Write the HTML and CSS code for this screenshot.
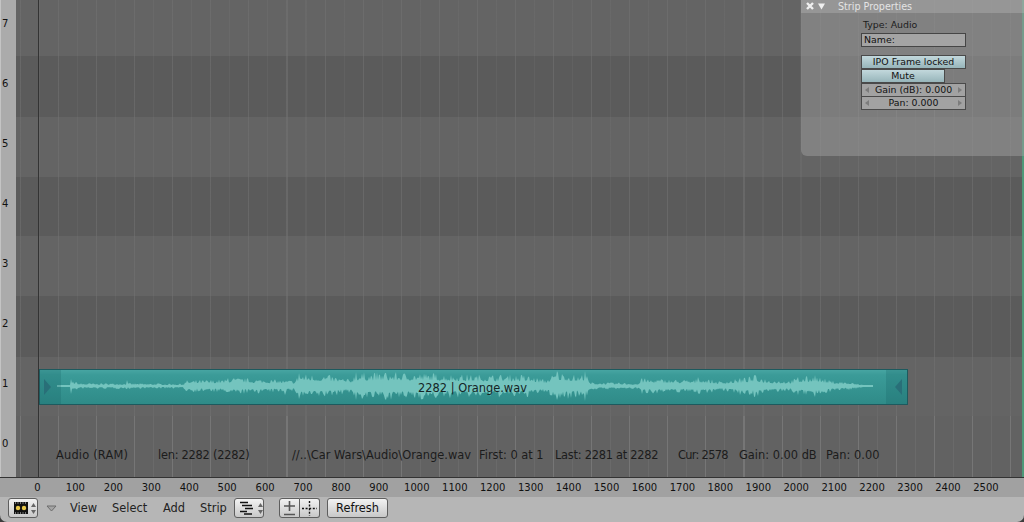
FILE: index.html
```html
<!DOCTYPE html>
<html lang="en">
<head>
  <meta charset="UTF-8" />
  <title>Video Sequence Editor</title>
  <link rel="stylesheet" href="styles.css">
</head>
<body>
  <div class="window">
    <div class="main">
      <div class="y-ruler">
        <span>7</span><span>6</span><span>5</span><span>4</span>
        <span>3</span><span>2</span><span>1</span><span>0</span>
      </div>

      <div class="canvas">
        <div class="band light h56"></div>
        <div class="band dark h61"></div>
        <div class="band light h60"></div>
        <div class="band dark h59"></div>
        <div class="band light h60"></div>
        <div class="band dark h61"></div>
        <div class="band light h59"></div>
        <div class="band last h61">
          <div class="status">
            <span class="wide">Audio (RAM)</span>
            <span class="tight">len: 2282 (2282)</span>
            <span>//..\Car Wars\Audio\Orange.wav</span>
            <span>First: 0 at 1</span>
            <span class="tight">Last: 2281 at 2282</span>
            <span class="tighter">Cur: 2578</span>
            <span>Gain: 0.00 dB</span>
            <span>Pan: 0.00</span>
          </div>
        </div>

        <div class="strip">
          <svg class="wave" viewBox="39 369 869 36" preserveAspectRatio="none">
            <polygon id="wave" points=""></polygon>
          </svg>
          <div class="handle left"><i></i></div>
          <div class="strip-name">2282 | Orange.wav</div>
          <div class="handle right"><i></i></div>
        </div>
      </div>

      <div class="panel">
        <div class="panel-head">
          <svg class="panel-icons" width="22" height="11" viewBox="0 0 22 11">
            <path d="M2 2 L8 8 M8 2 L2 8" stroke="#f0f0f0" stroke-width="2.4" fill="none"></path>
            <path d="M13 2.5 H20 L16.5 8.5 Z" fill="#f0f0f0"></path>
          </svg>
          <span>Strip Properties</span>
        </div>
        <div class="panel-body">
          <div class="type-label">Type: Audio</div>
          <div class="field">Name:</div>
          <div class="btn-stack">
            <div class="toggle">IPO Frame locked</div>
            <div class="toggle short">Mute</div>
            <div class="num"><b class="arr-l"></b>Gain (dB): 0.000<b class="arr-r"></b></div>
            <div class="num"><b class="arr-l"></b>Pan: 0.000<b class="arr-r"></b></div>
          </div>
        </div>
      </div>
    </div>

    <div class="x-ruler">
      <span>0</span><span>100</span><span>200</span><span>300</span><span>400</span><span>500</span>
      <span>600</span><span>700</span><span>800</span><span>900</span><span>1000</span><span>1100</span>
      <span>1200</span><span>1300</span><span>1400</span><span>1500</span><span>1600</span><span>1700</span>
      <span>1800</span><span>1900</span><span>2000</span><span>2100</span><span>2200</span><span>2300</span>
      <span>2400</span><span>2500</span>
    </div>

    <div class="header">
      <div class="btn icon-menu">
        <svg width="14" height="12" viewBox="0 0 14 12">
          <rect width="14" height="12" fill="#111"></rect>
          <circle cx="4" cy="6" r="2.2" fill="#e8c84a"></circle>
          <circle cx="10" cy="6" r="2.2" fill="#e8c84a"></circle>
          <path d="M1 1 H13 M1 11 H13" stroke="#ddd" stroke-width="1" stroke-dasharray="1 1.5"></path>
        </svg>
        <svg class="updown" width="5" height="11" viewBox="0 0 5 11">
          <path d="M2.5 0 L5 4 H0 Z M2.5 11 L5 7 H0 Z" fill="#666"></path>
        </svg>
      </div>
      <svg class="pulldown" width="11" height="7" viewBox="0 0 11 7">
        <path d="M1 1 H10 L5.5 6 Z" fill="#a4a4a4" stroke="#6c6c6c"></path>
      </svg>
      <nav class="menu">
        <span>View</span><span>Select</span><span>Add</span><span>Strip</span>
      </nav>
      <div class="btn icon-menu display">
        <svg width="16" height="14" viewBox="0 0 16 14">
          <path d="M1 1.5 H9 M3 4.5 H13 M6 7.5 H14 M1 10.5 H8 M5 13 H13" stroke="#111" stroke-width="1.4"></path>
        </svg>
        <svg class="updown" width="5" height="11" viewBox="0 0 5 11">
          <path d="M2.5 0 L5 4 H0 Z M2.5 11 L5 7 H0 Z" fill="#666"></path>
        </svg>
      </div>
      <div class="btn-group">
        <div class="btn seg">
          <svg width="13" height="15" viewBox="0 0 13 15">
            <path d="M1 5 H12 M6.5 0 V10 M1 13.5 H12" stroke="#555" stroke-width="1.6"></path>
          </svg>
        </div>
        <div class="btn seg">
          <svg width="15" height="15" viewBox="0 0 15 15">
            <path d="M0 7.5 H15 M7.5 0 V15" stroke="#111" stroke-width="1.4" stroke-dasharray="2 1.6"></path>
          </svg>
        </div>
      </div>
      <div class="btn refresh">Refresh</div>
    </div>
  </div>

  <script src="wave.js"></script>
</body>
</html>
```

FILE: styles.css
```css
html,
body {
  margin: 0;
  height: 100%;
  overflow: hidden;
  background-color: #3c3c3c;
}
body {
  font-family: "DejaVu Sans", sans-serif;
  color: #111;
}
.window {
  width: 1024px;
  height: 522px;
  display: flex;
  flex-direction: column;
  border-radius: 0 0 7px 7px;
  overflow: hidden;
}

/* main area */
.main {
  position: relative;
  height: 478px;
  display: flex;
  overflow: hidden;
  background-color: #8d8d8d;
  border-bottom: 1px solid #333;
  box-sizing: border-box;
}
.y-ruler {
  width: 16px;
  flex: none;
  margin-top: -7px;
  background-color: #ababab;
  border-left: 1px solid #c4c4c4;
  box-sizing: border-box;
  font-size: 10px;
}
.y-ruler span {
  display: flex;
  height: 60px;
  align-items: center;
  padding-left: 1px;
}
.canvas {
  position: relative;
  flex: 1;
  display: flex;
  flex-direction: column;
  border-right: 2px solid #4f9878;
}
.canvas::before {
  content: "";
  position: absolute;
  left: 22px;
  top: 0;
  bottom: 0;
  width: 1px;
  background-color: #333;
  z-index: 1;
}
.band {
  position: relative;
  flex: none;
}
.light {
  background-color: #646464;
  background-image: repeating-linear-gradient(90deg, transparent 0 3.9px, rgba(255,255,255,.05) 3.9px 5px, transparent 5px 22.9px, rgba(255,255,255,.03) 22.9px 24px, transparent 24px 38.08px);
}
.dark {
  background-color: #5b5b5b;
  background-image: repeating-linear-gradient(90deg, transparent 0 3.9px, rgba(255,255,255,.08) 3.9px 5px, transparent 5px 22.9px, rgba(255,255,255,.04) 22.9px 24px, transparent 24px 38.08px);
}
.last {
  background-color: #626262;
  background-image: repeating-linear-gradient(90deg, transparent 0 3.9px, rgba(255,255,255,.13) 3.9px 5px, transparent 5px 22.9px, rgba(255,255,255,.05) 22.9px 24px, transparent 24px 38.08px);
}
.h56 { height: 56px; }
.h59 { height: 59px; }
.h60 { height: 60px; }
.h61 { height: 61px; }

.status {
  position: absolute;
  left: 40px;
  top: 31px;
  display: grid;
  grid-template-columns: 102px 134px 187px 76px 123px 61px 87px auto;
  font-size: 11.4px;
  line-height: 16px;
  white-space: nowrap;
  color: #1c1c1c;
}
.wide { letter-spacing: .2px; }
.tight { letter-spacing: -.25px; }
.tighter { letter-spacing: -.7px; }

/* the audio strip sits on the timeline */
.strip {
  position: absolute;
  left: 23px;
  top: 369px;
  width: 869px;
  height: 36px;
  box-sizing: border-box;
  display: flex;
  justify-content: space-between;
  align-items: center;
  border: 1px solid #1d5a5e;
  background: linear-gradient(#47a5a2 0, #3b9b98 5px, #2f8b88 100%);
}
.wave {
  position: absolute;
  left: -1px;
  top: -1px;
  width: 869px;
  height: 36px;
}
.wave polygon {
  fill: #74c4be;
}
.handle {
  position: relative;
  width: 21px;
  height: 100%;
  display: flex;
  align-items: center;
  justify-content: center;
  background-color: rgba(20, 90, 95, .22);
}
.handle i {
  width: 0;
  height: 0;
  border-top: 8px solid transparent;
  border-bottom: 8px solid transparent;
}
.handle.left i {
  border-left: 7px solid #296f78;
  margin-right: 6px;
}
.handle.right i {
  border-right: 7px solid #296f78;
  margin-left: 4px;
}
.strip-name {
  position: relative;
  font-size: 11.4px;
  color: #152525;
  margin-top: 2px;
  margin-right: 2px;
}

/* floating panel */
.panel {
  position: absolute;
  right: 0;
  top: 0;
  width: 223px;
  height: 156px;
  border-radius: 0 0 0 6px;
  background-color: rgba(158, 158, 158, .5);
}
.panel-head {
  height: 13px;
  display: flex;
  align-items: center;
  padding-left: 4px;
  font-size: 9.6px;
  color: #e4e4e4;
  background-color: rgba(190, 190, 190, .35);
}
.panel-icons {
  margin-right: 11px;
}
.panel-body {
  width: 105px;
  margin-left: 60px;
  font-size: 9.4px;
  line-height: 13px;
  white-space: nowrap;
}
.type-label {
  padding: 5px 0 2px 2px;
  height: 13px;
  color: #1c1c1c;
}
.field {
  height: 14px;
  box-sizing: border-box;
  padding-left: 2px;
  line-height: 12px;
  border: 1px solid #454545;
  background-color: #a4a4a4;
}
.btn-stack {
  margin-top: 8px;
  display: flex;
  flex-direction: column;
  text-align: center;
}
.toggle,
.num {
  height: 14px;
  box-sizing: border-box;
  line-height: 12px;
  border: 1px solid #4a4a4a;
}
.toggle {
  background: linear-gradient(#c2d8dc, #97b5ba);
}
.toggle.short {
  width: 84px;
}
.num {
  position: relative;
  background-color: #a2a2a2;
}
.num + .num {
  margin-top: -1px;
}
.num b {
  position: absolute;
  top: 3px;
  width: 0;
  height: 0;
  border-top: 3px solid transparent;
  border-bottom: 3px solid transparent;
}
.arr-l {
  left: 3px;
  border-right: 4px solid #7c7c7c;
}
.arr-r {
  right: 3px;
  border-left: 4px solid #7c7c7c;
}

/* frame numbers */
.x-ruler {
  height: 19px;
  flex: none;
  display: flex;
  padding-left: 18.5px;
  align-items: center;
  background-color: #a1a1a1;
  font-size: 10px;
}
.x-ruler span {
  flex: none;
  width: 37.94px;
  text-align: center;
}

/* bottom header */
.header {
  flex: 1;
  display: flex;
  align-items: flex-start;
  padding: 1px 0 0 8px;
  background-color: #b6b6b6;
  font-size: 11.4px;
}
.btn {
  box-sizing: border-box;
  height: 20px;
  border: 1px solid #5e5e5e;
  border-radius: 3px;
  background: linear-gradient(#f2f2f2, #c8c8c8);
  display: flex;
  align-items: center;
  justify-content: center;
}
.icon-menu {
  width: 30px;
  gap: 3px;
  padding-left: 3px;
}
.updown {
  flex: none;
}
.pulldown {
  margin: 7px 0 0 8px;
}
.menu {
  display: flex;
  line-height: 20px;
  margin-left: 13px;
  color: #222;
}
.menu span:nth-child(1) { width: 42px; }
.menu span:nth-child(2) { width: 51px; }
.menu span:nth-child(3) { width: 37px; }
.menu span:nth-child(4) { width: 34px; }
.display {
  width: 30px;
  margin-left: 0;
}
.btn-group {
  display: flex;
  margin-left: 15px;
}
.seg {
  width: 21px;
  border-radius: 3px 0 0 3px;
}
.seg + .seg {
  width: 20px;
  border-left: 0;
  border-radius: 0 3px 3px 0;
}
.refresh {
  width: 61px;
  margin-left: 7px;
}
```

FILE: wave.js
```js
// envelope of the waveform: [x on screen, half height]
const env = [
  [57, 1], [70, 1], [71, 6], [75, 5], [80, 3], [120, 3], [180, 2.5], [184, 3], [186, 6],
  [225, 7], [228, 9], [270, 7], [295, 6], [299, 13], [325, 12], [336, 10], [350, 7],
  [356, 14], [420, 14], [470, 12], [498, 12], [525, 12], [545, 7], [557, 15], [580, 11],
  [585, 15], [590, 4], [625, 3.5], [638, 3], [642, 8], [695, 6.5], [698, 9], [720, 5],
  [740, 8], [755, 11], [770, 7], [790, 6], [798, 9], [815, 11], [830, 6], [850, 4],
  [860, 2], [873, 1]
];
// single tall peaks: [x, up, down]
const peaks = [
  [71, 7, 8], [127, 6, 3], [228, 8, 6], [285, 4, 9], [299, 13, 13], [356, 14, 14],
  [385, 13, 13], [557, 15, 14], [585, 15, 15], [642, 8, 8], [698, 9, 7], [740, 8, 9],
  [755, 11, 11], [798, 9, 9], [815, 11, 11]
];

let seed = 7;
function rnd() {
  seed = (seed * 16807) % 2147483647;
  return seed / 2147483647;
}

function envelope(x) {
  for (let i = 1; i < env.length; i++) {
    if (x <= env[i][0]) {
      const a = env[i - 1], b = env[i];
      return a[1] + (b[1] - a[1]) * (x - a[0]) / (b[0] - a[0]);
    }
  }
  return 1;
}

// solid core with thin spikes, squaring the random keeps tall ones rare
function sample(h) {
  const r = rnd();
  return Math.max(1, h * (0.4 + 0.6 * r * r));
}

const upper = [], lower = [];
for (let x = 57; x <= 873; x += 1) {
  const h = envelope(x);
  let up = sample(h);
  let down = sample(h);
  for (const p of peaks) {
    if (Math.abs(p[0] - x) < 1) {
      up = p[1];
      down = p[2];
    }
  }
  upper.push(x + "," + (386 - up).toFixed(1));
  lower.unshift(x + "," + (386 + down).toFixed(1));
}
document.getElementById("wave").setAttribute("points", upper.concat(lower).join(" "));
```
